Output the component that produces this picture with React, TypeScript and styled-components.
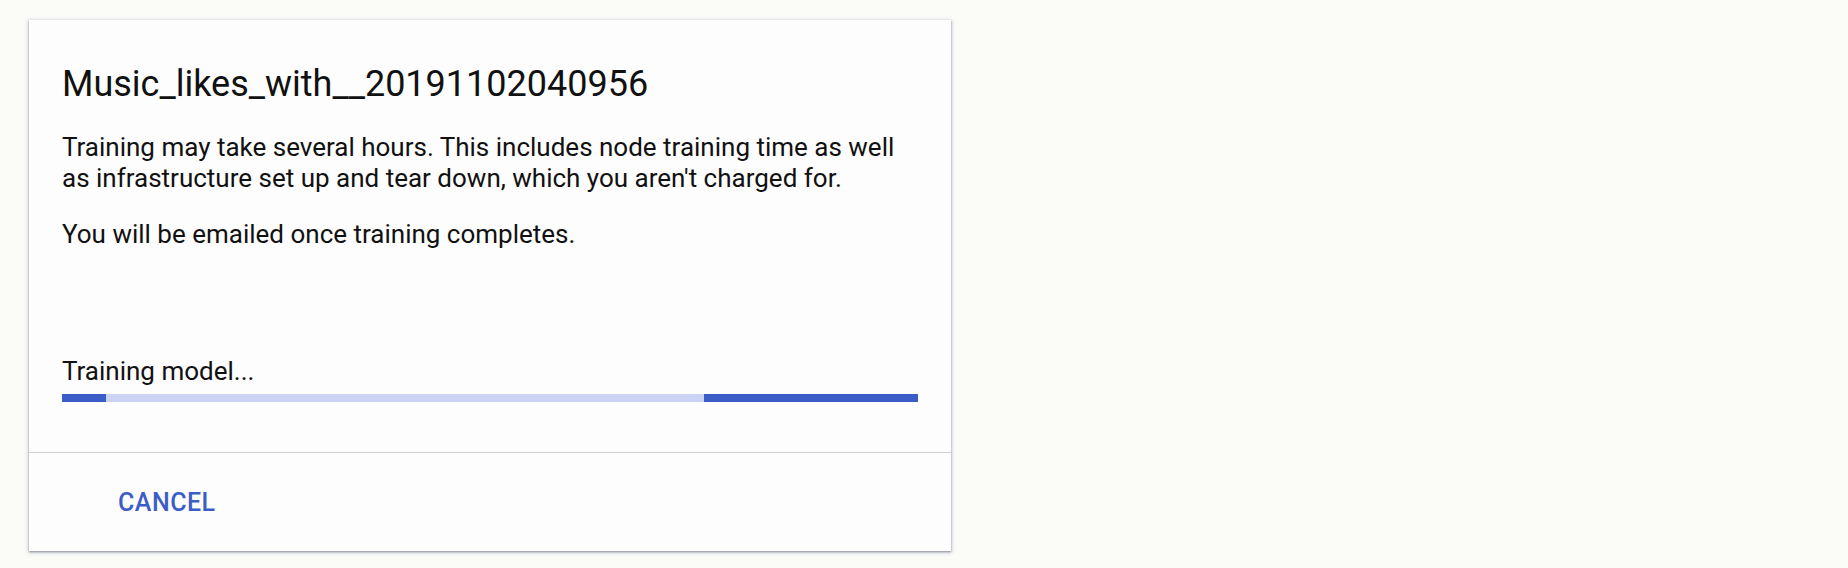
import styled, { createGlobalStyle } from "styled-components";

const GlobalStyle = createGlobalStyle`
  * {
    box-sizing: border-box;
  }
  body {
    margin: 0;
    background: #fbfbf8;
    font-family: Roboto, "Liberation Sans", Arial, sans-serif;
    color: #111;
  }
`;

const Page = styled.div`
  padding: 20px 29px;
`;

const Card = styled.section`
  width: 922px;
  background: #fdfdfd;
  box-shadow: 0 1px 2px rgba(60, 64, 67, 0.5), 0 1px 4px 1px rgba(90, 100, 160, 0.22);
`;

const Content = styled.div`
  padding: 42px 33px 50px 33px;
`;

const Title = styled.h2`
  margin: 0;
  font-size: 36px;
  line-height: 44px;
  font-weight: 400;
`;

const Text = styled.p<{ gap: number }>`
  margin: ${(props) => props.gap}px 0 0;
  font-size: 26px;
  line-height: 31px;
`;

const Progress = styled.div`
  margin-top: 106px;
`;

const Label = styled.div`
  font-size: 26px;
  line-height: 31px;
`;

const Bar = styled.div`
  display: flex;
  height: 8px;
  margin-top: 7px;
  background: #cbd3f4;
`;

const Segment = styled.div<{ active?: boolean; size?: number }>`
  flex: ${(props) => (props.size ? `0 0 ${props.size}px` : "1")};
  background: ${(props) => (props.active ? "#3b5ec6" : "transparent")};
`;

const Footer = styled.footer`
  display: flex;
  align-items: center;
  height: 99px;
  padding-left: 65px;
  border-top: 1px solid #cfcfd4;
`;

const Button = styled.button`
  border: none;
  background: none;
  padding: 8px 24px;
  font-family: Roboto, "Liberation Sans", Arial, sans-serif;
  font-size: 25px;
  font-weight: 500;
  letter-spacing: 0.02em;
  color: #3b5ec6;
  text-transform: uppercase;
  cursor: pointer;
`;

export default function App() {
  return (
    <>
      <GlobalStyle />
      <Page>
        <Card>
          <Content>
            <Title>Music_likes_with__20191102040956</Title>
            <Text gap={26}>
              Training may take several hours. This includes node training time as well
              <br />
              as infrastructure set up and tear down, which you aren't charged for.
            </Text>
            <Text gap={25}>You will be emailed once training completes.</Text>
            <Progress>
              <Label>Training model...</Label>
              <Bar>
                <Segment active size={44} />
                <Segment />
                <Segment active size={214} />
              </Bar>
            </Progress>
          </Content>
          <Footer>
            <Button>Cancel</Button>
          </Footer>
        </Card>
      </Page>
    </>
  );
}
